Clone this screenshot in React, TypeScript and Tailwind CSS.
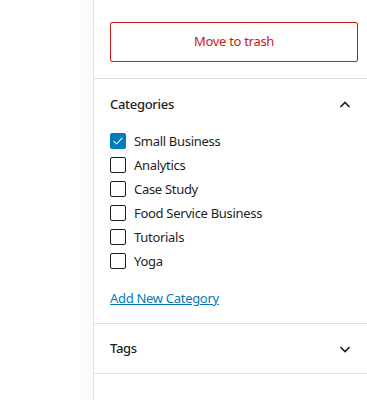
import React from "react";

const font = { fontFamily: '"Noto Sans", "Open Sans", sans-serif' };

function Check({ checked, label }: { checked?: boolean; label: string }) {
  return (
    <label className="flex items-center h-[24px]">
      <span
        className={
          checked
            ? "w-[16px] h-[16px] shrink-0 rounded-[2px] bg-[#007cba] border border-[#007cba] flex items-center justify-center"
            : "w-[16px] h-[16px] shrink-0 rounded-[2px] bg-white border border-[#1e1e1e] flex items-center justify-center"
        }
      >
        {checked && (
          <svg width="14" height="14" viewBox="0 0 24 24" fill="none">
            <path d="M5 12.5l4.5 4.5L19 7" stroke="white" strokeWidth="1.8" strokeLinecap="round" strokeLinejoin="round" />
          </svg>
        )}
      </span>
      <span className="ml-[8px] text-[13px] leading-[20px] tracking-[-0.3px] text-[#1e1e1e]">{label}</span>
    </label>
  );
}

function Chevron({ up }: { up?: boolean }) {
  return (
    <svg width="24" height="24" viewBox="0 0 24 24" fill="none">
      {up ? (
        <path d="M7.5 14l4.5-4.5 4.5 4.5" stroke="#1e1e1e" strokeWidth="1.6" />
      ) : (
        <path d="M7.5 10l4.5 4.5 4.5-4.5" stroke="#1e1e1e" strokeWidth="1.6" />
      )}
    </svg>
  );
}

export default function App() {
  return (
    <div className="w-[367px] h-[400px] overflow-hidden bg-white flex" style={font}>
      <div className="w-[80px] shrink-0 bg-white" />
      <div className="w-[13px] shrink-0 bg-[#fcfcfc]" />
      <div className="w-[280px] shrink-0 border-l border-[#e0e0e0] h-full">
        <div className="px-[16px] pt-[22px] pb-[16px] border-b border-[#e0e0e0]">
          <button className="w-[248px] h-[40px] border border-[#cc1818] rounded-[2px] text-[#cc1818] text-[13px] tracking-[-0.3px] flex items-center justify-center">
            Move to trash
          </button>
        </div>
        <div className="border-b border-[#e0e0e0]">
          <div className="flex items-center justify-between px-[16px] h-[50px] pt-[2px]">
            <span className="text-[13px] font-medium tracking-[-0.3px] text-[#1e1e1e]">Categories</span>
            <span className="flex"><Chevron up /></span>
          </div>
          <div className="px-[16px]">
            <Check checked label="Small Business" />
            <Check label="Analytics" />
            <Check label="Case Study" />
            <Check label="Food Service Business" />
            <Check label="Tutorials" />
            <Check label="Yoga" />
          </div>
          <div className="px-[16px] pt-[15px] pb-[15px] text-[13px] leading-[20px]">
            <a className="text-[#007cba] underline tracking-[-0.3px]">Add New Category</a>
          </div>
        </div>
        <div className="border-b border-[#e0e0e0]">
          <div className="flex items-center justify-between px-[16px] h-[49px]">
            <span className="text-[13px] font-medium tracking-[-0.3px] text-[#1e1e1e]">Tags</span>
            <span className="flex"><Chevron /></span>
          </div>
        </div>
      </div>
    </div>
  );
}
